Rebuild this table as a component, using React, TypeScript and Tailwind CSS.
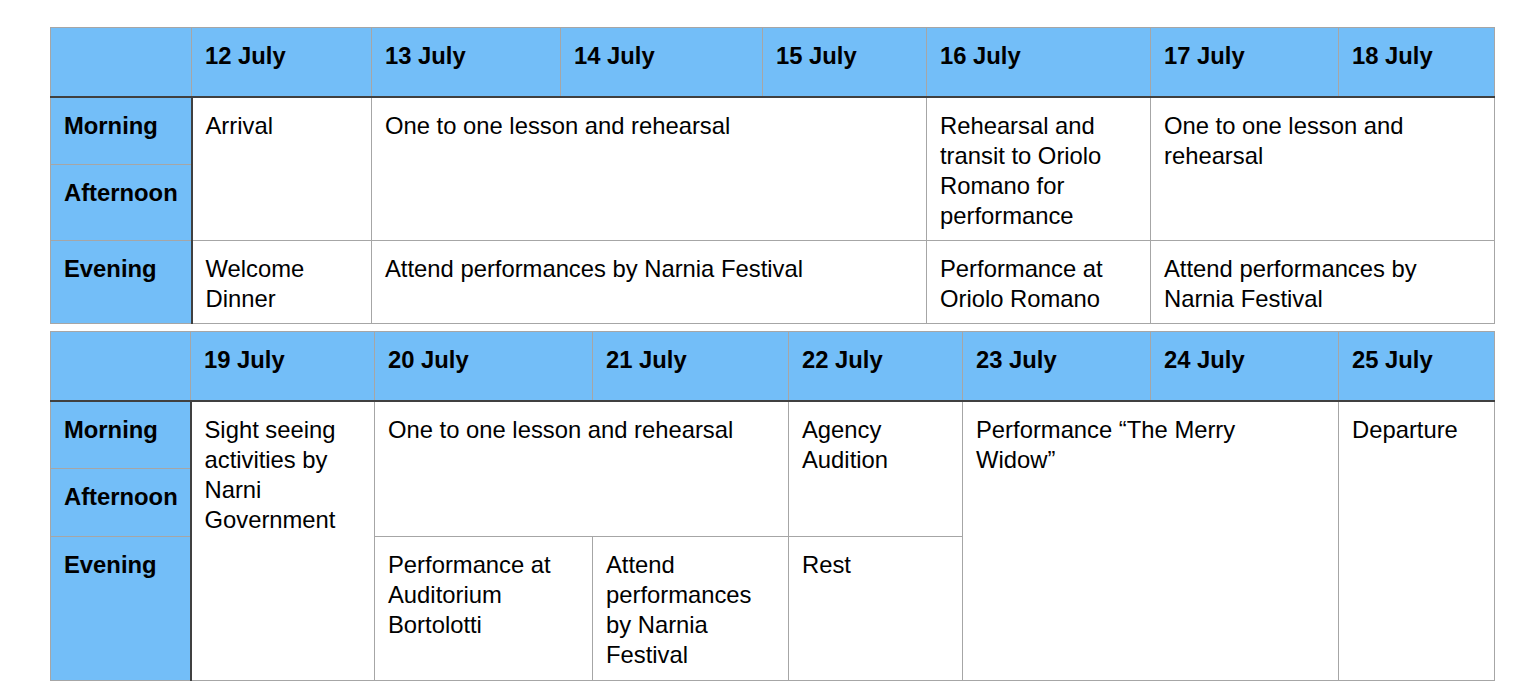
const head = 'bg-[#73bef8] border border-[#a6a6a6] border-b-2 border-b-[#404040] text-left align-top font-bold px-[13px] pt-[13px]';
const side = 'bg-[#73bef8] border border-[#a6a6a6] border-r-2 border-r-[#404040] text-left align-top font-bold px-[13px] pt-[13px]';
const cell = 'border border-[#a6a6a6] align-top px-[13px] pt-[13px] bg-white';

function Cols({ widths }: { widths: number[] }) {
  return (
    <colgroup>
      {widths.map((w, i) => (
        <col key={i} style={{ width: w }} />
      ))}
    </colgroup>
  );
}

function Header({ days }: { days: string[] }) {
  return (
    <tr className="h-[69px]">
      <th className={head}></th>
      {days.map((d) => (
        <th key={d} className={head}>
          {d}
        </th>
      ))}
    </tr>
  );
}

export default function App() {
  return (
    <div
      className="min-h-screen bg-white pl-[50px] pt-[27px] text-[23.8px] leading-[30px] text-black"
      style={{ fontFamily: '"Liberation Sans", Arial, sans-serif' }}
    >
      <table className="w-[1444px] table-fixed border-collapse">
        <Cols widths={[141, 180, 189, 202, 164, 224, 188, 156]} />
        <tbody>
          <Header days={['12 July', '13 July', '14 July', '15 July', '16 July', '17 July', '18 July']} />
          <tr className="h-[68px]">
            <th className={side}>Morning</th>
            <td className={cell} rowSpan={2}>Arrival</td>
            <td className={cell} rowSpan={2} colSpan={3}>One to one lesson and rehearsal</td>
            <td className={cell} rowSpan={2}>Rehearsal and transit to Oriolo Romano for performance</td>
            <td className={cell} rowSpan={2} colSpan={2}>One to one lesson and rehearsal</td>
          </tr>
          <tr className="h-[76px]">
            <th className={side}>Afternoon</th>
          </tr>
          <tr className="h-[83px]">
            <th className={side}>Evening</th>
            <td className={cell}>Welcome Dinner</td>
            <td className={cell} colSpan={3}>Attend performances by Narnia Festival</td>
            <td className={cell}>Performance at Oriolo Romano</td>
            <td className={cell} colSpan={2}>Attend performances by Narnia Festival</td>
          </tr>
        </tbody>
      </table>

      <table className="mt-[7px] w-[1444px] table-fixed border-collapse">
        <Cols widths={[140, 184, 218, 196, 174, 188, 188, 156]} />
        <tbody>
          <Header days={['19 July', '20 July', '21 July', '22 July', '23 July', '24 July', '25 July']} />
          <tr className="h-[68px]">
            <th className={side}>Morning</th>
            <td className={cell} rowSpan={3}>Sight seeing activities by Narni Government</td>
            <td className={cell} rowSpan={2} colSpan={2}>One to one lesson and rehearsal</td>
            <td className={cell} rowSpan={2}>Agency Audition</td>
            <td className={cell} rowSpan={3} colSpan={2}>
              Performance “The Merry
              <br />
              Widow”
            </td>
            <td className={cell} rowSpan={3}>Departure</td>
          </tr>
          <tr className="h-[68px]">
            <th className={side}>Afternoon</th>
          </tr>
          <tr className="h-[144px]">
            <th className={side}>Evening</th>
            <td className={cell}>Performance at Auditorium Bortolotti</td>
            <td className={cell}>Attend performances by Narnia Festival</td>
            <td className={cell}>Rest</td>
          </tr>
        </tbody>
      </table>
    </div>
  );
}
